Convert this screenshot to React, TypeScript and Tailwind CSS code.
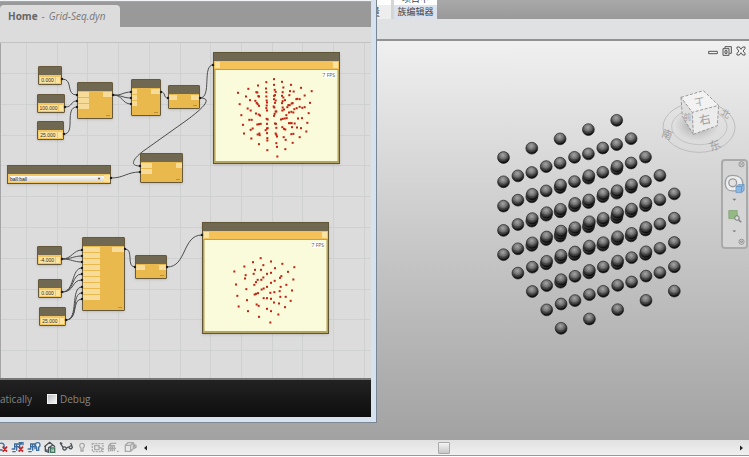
import React from 'react'

interface GraphNode {
  id: string
  x: number
  y: number
  w: number
  h: number
  inputs?: number
  inputWidth?: number
  outputWidth?: number
  value?: string
}

const nodes: GraphNode[] = [
  { id: 'min-a', x: 38, y: 23, w: 24, h: 19, value: '0.000' },
  { id: 'max-a', x: 37, y: 51, w: 28, h: 19, value: '100.000' },
  { id: 'step-a', x: 37, y: 78, w: 27, h: 19, value: '25.000' },
  { id: 'seq-a', x: 77, y: 39, w: 36, h: 37, inputs: 3, inputWidth: 11, outputWidth: 9 },
  { id: 'xyz-a', x: 131, y: 36, w: 30, h: 37, inputs: 3, inputWidth: 5, outputWidth: 9 },
  { id: 'flat-a', x: 168, y: 42, w: 32, h: 24, inputs: 1, inputWidth: 8, outputWidth: 8 },
  { id: 'family', x: 140, y: 110, w: 43, h: 30, inputs: 2, inputWidth: 11, outputWidth: 6 },
  { id: 'min-b', x: 37, y: 203, w: 25, h: 19, value: '-4.000' },
  { id: 'max-b', x: 38, y: 236, w: 24, h: 19, value: '0.000' },
  { id: 'step-b', x: 39, y: 264, w: 27, h: 19, value: '25.000' },
  { id: 'grid-b', x: 82, y: 194, w: 43, h: 74, inputs: 9, inputWidth: 17, outputWidth: 12 },
  { id: 'flat-b', x: 135, y: 212, w: 32, h: 24, inputs: 1, inputWidth: 9, outputWidth: 7 },
]

const wires = [
  'M62 79C74 79 65 95 77 95',
  'M65 107C73 107 70 101 77 101',
  'M64 134C76 134 64 107 77 107',
  'M113 95C121 96 123 92 131 92',
  'M113 95C121 95 123 98 131 98',
  'M113 95C123 95 122 104 131 104',
  'M161 92C166 92 163 98 168 98',
  'M200 98C212 98 202 65 213 65',
  'M200 98C212 98 206 106 187 120L142 152C132 160 130 166 140 166',
  'M111 178C124 178 127 172 140 172',
  'M62 259C72 259 73 250 82 250',
  'M62 259C72 259 73 256 82 256',
  'M62 259C72 259 73 262 82 262',
  'M62 292C75 292 71 268 82 268',
  'M62 292C75 292 71 274 82 274',
  'M62 292C75 292 71 280 82 280',
  'M66 320C79 320 70 287 82 287',
  'M66 320C79 320 71 293 82 293',
  'M66 320C79 320 71 299 82 299',
  'M125 249C134 249 126 267 135 267',
  'M167 267C187 267 182 235 202 235',
]

const ports = [
  [62, 79], [65, 107], [64, 134], [77, 95], [77, 101], [77, 107], [113, 95],
  [131, 92], [131, 98], [131, 104], [161, 92], [168, 98], [200, 98], [213, 65],
  [140, 166], [140, 172], [111, 178], [62, 259], [62, 292], [66, 320],
  [82, 250], [82, 256], [82, 262], [82, 268], [82, 274], [82, 280], [82, 287],
  [82, 293], [82, 299], [125, 249], [135, 267], [167, 267], [202, 235],
]

const cloudA = [
  [222, 118], [199, 127], [246, 126], [174, 137], [273, 135], [303, 144], [145, 147], [114, 159],
  [335, 154], [222, 135], [224, 150], [227, 156], [198, 146], [250, 143], [169, 157], [172, 158],
  [199, 157], [281, 155], [270, 154], [248, 157], [314, 167], [138, 170], [150, 181], [119, 193],
  [330, 189], [166, 183], [175, 169], [177, 170], [199, 170], [200, 182], [201, 188], [222, 168],
  [225, 166], [222, 178], [227, 182], [225, 189], [246, 168], [250, 173], [268, 166], [248, 184],
  [255, 181], [246, 190], [289, 178], [292, 177], [299, 178], [278, 190], [275, 191], [170, 189],
  [173, 193], [177, 198], [265, 196], [262, 202], [269, 196], [200, 197], [199, 205], [201, 212],
  [143, 206], [152, 212], [124, 226], [168, 221], [176, 224], [180, 227], [223, 203], [221, 200],
  [227, 215], [224, 222], [222, 228], [229, 215], [248, 203], [247, 212], [252, 209], [299, 201],
  [307, 204], [314, 202], [283, 208], [290, 205], [267, 218], [274, 216], [280, 218], [259, 226],
  [326, 220], [148, 240], [155, 240], [200, 237], [203, 239], [243, 239], [248, 237], [254, 236],
  [260, 235], [294, 236], [306, 235], [129, 255], [172, 254], [177, 253], [182, 252], [201, 252],
  [228, 252], [225, 251], [267, 250], [271, 250], [275, 250], [284, 251], [322, 249], [152, 270],
  [158, 266], [197, 271], [201, 266], [203, 265], [229, 264], [247, 262], [252, 267], [256, 269],
  [276, 262], [291, 263], [303, 265], [319, 275], [132, 281], [173, 284], [178, 281], [179, 286],
  [201, 280], [227, 281], [229, 285], [231, 290], [154, 296], [251, 292], [257, 300], [274, 283],
  [280, 282], [299, 292], [202, 295], [202, 302], [177, 313], [278, 309], [229, 310], [231, 321],
  [202, 331], [256, 328], [232, 350],
]

const cloudB = [
  [209, 143], [186, 155], [240, 153], [217, 164], [274, 160], [160, 168], [252, 173], [310, 170],
  [130, 183], [192, 178], [210, 178], [291, 184], [164, 194], [162, 204], [188, 190], [228, 190],
  [240, 187], [217, 201], [267, 202], [271, 197], [307, 207], [135, 222], [200, 208], [211, 208],
  [195, 215], [190, 223], [240, 217], [251, 211], [286, 223], [166, 236], [228, 229], [212, 237],
  [218, 234], [269, 229], [195, 250], [201, 248], [191, 252], [238, 247], [250, 245], [266, 242],
  [303, 240], [139, 256], [168, 269], [218, 263], [228, 263], [240, 265], [268, 259], [284, 259],
  [299, 271], [249, 276], [264, 279], [143, 288], [197, 282], [203, 286], [282, 290], [171, 302],
  [228, 295], [240, 302], [262, 312], [204, 319], [238, 336],
]

const steps = [0, 1, 2, 3, 4]

// 5 x 5 x 5 lattice, back layer first
const spheres = steps.flatMap((c) =>
  [...steps].reverse().flatMap((b) =>
    steps.map((a) => ({
      key: `${a}-${b}-${c}`,
      x: 503.5 + a * 28.3 + c * 14.4,
      y: 157.5 - a * 9.3 + b * 24.3 + c * 18.4,
    }))
  )
)

function NodeCard({ node }: { node: GraphNode }) {
  return (
    <div
      className="absolute flex flex-col rounded-[1px] border border-[#66583a] bg-[#eab94d] shadow-sm"
      style={{ left: node.x, top: node.y, width: node.w, height: node.h }}
    >
      <div className="h-2 shrink-0 bg-[#706850]" />
      {node.value ? (
        <div className="flex flex-1 items-center justify-between bg-[#f3c664] p-px">
          <span className="flex flex-1 justify-center bg-[#fbe3a6] font-['Liberation_Sans',sans-serif] text-[5px] leading-[6px] text-[#3a2e18]">
            {node.value}
          </span>
          <span className="ml-px h-[6px] w-1 bg-[#fce4a0]" />
        </div>
      ) : (
        <div className="flex flex-1 items-start justify-between pt-px">
          <div className="flex flex-col gap-px">
            {Array.from({ length: node.inputs ?? 0 }, (_, i) => (
              <span key={i} className="h-[5px] bg-[#f6dc98]" style={{ width: node.inputWidth }} />
            ))}
          </div>
          <span className="h-[5px] bg-[#f6dc98]" style={{ width: node.outputWidth }} />
          <span className="absolute right-0.5 bottom-0.5 h-px w-1 bg-[#b8903c]" />
        </div>
      )}
    </div>
  )
}

function WatchNode({ x, y, viewBox, points }: { x: number; y: number; viewBox: string; points: number[][] }) {
  return (
    <div
      className="absolute flex h-[112px] w-[127px] flex-col border border-[#5f5636] bg-[#b5a362] shadow-sm"
      style={{ left: x, top: y }}
    >
      <div className="h-2 bg-[#706850]" />
      <div className="flex h-2 items-center justify-between bg-[#f5c25a] px-px">
        <span className="h-[6px] w-[5px] bg-[#fce4a0]" />
        <span className="h-[6px] w-[5px] bg-[#fce4a0]" />
      </div>
      <div className="relative mx-px mt-px mb-0.5 flex-1 border-x border-[#d8cc94] bg-[#fafbda]">
        <svg viewBox={viewBox} className="absolute inset-0 h-full w-full">
          {points.map(([px, py], i) => (
            <rect key={i} x={px - 3} y={py - 3} width="6" height="6" fill="#c02314" />
          ))}
        </svg>
        <span className="absolute top-0.5 right-0.5 bg-white text-[5px] leading-[6px] text-[#555]">7 FPS</span>
      </div>
    </div>
  )
}

function GraphCanvas() {
  return (
    <div className="relative min-h-0 flex-1 overflow-hidden border-l border-[#a5a5a5] bg-[#dcdcdc]">
      <div className="absolute inset-y-0 -left-px w-full">
        <svg className="absolute inset-0 h-full w-full">
          <g stroke="#cfd0d0" strokeWidth="1">
            {Array.from({ length: 12 }, (_, i) => (
              <path key={i} d={`M${26.5 + Math.round(i * 30.7)} 0V340`} />
            ))}
            {Array.from({ length: 10 }, (_, i) => (
              <path key={i} d={`M0 ${30.5 + Math.round(i * 30.8)}H380`} />
            ))}
          </g>
        </svg>
        {nodes.map((node) => (
          <NodeCard key={node.id} node={node} />
        ))}
        <div className="absolute top-[122px] left-[7px] flex h-[19px] w-[104px] flex-col border border-[#66583a] bg-[#f3c664] shadow-sm">
          <div className="h-2 bg-[#706850]" />
          <div className="flex flex-1 items-center gap-px pl-0.5">
            <select
              aria-label="Family type"
              className="h-[6px] min-w-0 flex-1 appearance-none bg-linear-to-b from-[#fafafa] to-[#d8d5cc] font-['Liberation_Sans',sans-serif] text-[5px] leading-[6px] text-[#222]"
            >
              <option>ball:ball</option>
            </select>
            <span className="-ml-2 w-1.5 text-[4px] leading-[6px] text-[#333]">▼</span>
            <span className="h-[7px] w-[6px] bg-[#fce4a0]" />
          </div>
        </div>
        <WatchNode x={213} y={9} viewBox="48 92 363 270" points={cloudA} />
        <WatchNode x={202} y={179} viewBox="42 90 363 270" points={cloudB} />
        <svg className="pointer-events-none absolute inset-0 h-full w-full">
          <g transform="translate(0 -43)">
            <g fill="none" stroke="#4d4d4d" strokeWidth="1">
              {wires.map((d) => (
                <path key={d} d={d} />
              ))}
            </g>
            {ports.map(([x, y]) => (
              <circle key={`${x}-${y}`} cx={x} cy={y} r="1.2" fill="#1c1c1c" />
            ))}
          </g>
        </svg>
      </div>
    </div>
  )
}

function DynamoWindow() {
  return (
    <section className="absolute top-0 left-0 flex h-[423px] w-[377px] flex-col border-r border-b border-[#7c8592] bg-[#d6e2f0] pr-[5px] pb-[5px] font-['Open_Sans',sans-serif]">
      <div className="h-0.5 shrink-0 border-b border-[#a5a5a5] bg-[#f1f4f7]" />
      <div className="flex h-[25px] shrink-0 items-end bg-[#999]">
        <div className="flex h-[22px] w-[120px] items-center rounded-t-sm bg-[#dcdcdc] pl-2 text-[10px] leading-4 whitespace-nowrap text-[#777]">
          <b className="text-[#666]">Home</b>
          <span className="px-1">-</span>
          <i>Grid-Seq.dyn</i>
        </div>
      </div>
      <div className="h-4 shrink-0 border-b border-[#c2c2c2] bg-[#dcdcdc]" />
      <GraphCanvas />
      <footer className="flex h-[39px] shrink-0 items-center border-t-2 border-[#777] bg-linear-to-b from-[#222] to-[#0e0e0e] text-[10px] leading-4 text-[#858585]">
        <label className="flex w-8 justify-end overflow-hidden whitespace-nowrap">
          <input type="checkbox" className="sr-only" />
          matically
        </label>
        <label className="ml-[15px] flex items-center gap-[3px]">
          <input
            type="checkbox"
            className="h-[10px] w-[10px] appearance-none border border-[#f2f2f2] bg-linear-to-br from-[#bcc0c4] to-[#f4f4f4]"
          />
          Debug
        </label>
      </footer>
    </section>
  )
}

function ViewCube() {
  return (
    <svg viewBox="55 180 231 198" className="mr-3 h-[66px] w-[77px]" fill="none">
      <defs>
        <radialGradient id="cubeShadow">
          <stop offset="0" stopColor="#777" stopOpacity=".75" />
          <stop offset="1" stopColor="#aaa" stopOpacity="0" />
        </radialGradient>
      </defs>
      <ellipse cx="172" cy="295" rx="108" ry="75" stroke="#bdbdbd" strokeWidth="3" />
      <ellipse cx="173" cy="293" rx="83" ry="54" stroke="#c3c3c3" strokeWidth="3" />
      <ellipse cx="166" cy="286" rx="68" ry="50" fill="url(#cubeShadow)" />
      <path d="M118 205L185 185L231 229L152 250Z" fill="#f2f2f2" />
      <path d="M118 205L152 250L155 316L122 262Z" fill="#dedede" />
      <path d="M152 250L231 229L227 290L155 316Z" fill="#ececec" />
      <path
        d="M118 205L185 185L231 229L152 250ZM118 205L122 262L155 316L152 250M155 316L227 290L231 229"
        stroke="#9a9a9a"
        strokeWidth="3"
        strokeDasharray="9 5"
      />
      <g fill="#a0a0a0" fontFamily="Noto Sans CJK SC, sans-serif" textAnchor="middle">
        <text x="173" y="230" fontSize="29" transform="rotate(170 173 219)">上</text>
        <text x="190" y="284" fontSize="35" transform="rotate(-12 190 272)">右</text>
        <text x="137" y="273" fontSize="24">前</text>
        <text x="76" y="328" fontSize="32" transform="rotate(20 76 318)">南</text>
        <text x="220" y="362" fontSize="35" transform="rotate(-22 220 351)">东</text>
        <text x="251" y="264" fontSize="28" transform="rotate(28 251 254)">北</text>
      </g>
    </svg>
  )
}

function NavigationBar() {
  return (
    <nav className="mr-px flex h-[90px] w-[27px] flex-col items-center rounded border-2 border-[#aaa] bg-[#d5d5d5]">
      <svg viewBox="0 0 69 264" className="h-[88px] w-[23px]" fill="none">
        <g stroke="#949494" strokeWidth="3">
          <circle cx="56" cy="10" r="8" />
          <path d="M52 6l8 8m0-8l-8 8" />
          <circle cx="56" cy="248" r="8" />
          <path d="M52 246h8l-4 6z" />
        </g>
        <path d="M28 44C12 44 6 56 6 69s8 23 23 23h31V69c0-16-13-25-32-25z" fill="#ededed" stroke="#9aa0a5" strokeWidth="4" />
        <circle cx="29" cy="67" r="12" fill="#e2e2e2" stroke="#999" strokeWidth="4" />
        <path d="M39 78l8-6h17v18l-8 7H39z" fill="#8db8e4" stroke="#638fbd" strokeWidth="2" />
        <path d="M39 78h17v19M56 78l8-6" stroke="#5c87b4" strokeWidth="2" />
        <path d="M28 116h12l-6 6zM28 213h12l-6 6z" fill="#777" />
        <path d="M17 152h26v25H17z" fill="#94b985" stroke="#759d68" strokeWidth="2" />
        <circle cx="42" cy="175" r="7" fill="#d9dfdb" stroke="#777" strokeWidth="3" />
        <path d="M47 180l8 8" stroke="#888" strokeWidth="5" />
      </svg>
    </nav>
  )
}

function WindowControls() {
  return (
    <div className="flex h-5 items-center gap-1 pr-[3px] text-[#555]">
      <button aria-label="Minimize">
        <svg viewBox="0 0 30 30" className="h-2.5 w-2.5" fill="none">
          <path d="M2 16h26v7H2z" fill="#f4f4f4" stroke="currentColor" strokeWidth="3" />
        </svg>
      </button>
      <button aria-label="Restore">
        <svg viewBox="0 0 30 30" className="h-2.5 w-2.5" fill="none">
          <path d="M9 7V2h19v20h-6M3 8h18v20H3zM9 14h6v8H9z" stroke="currentColor" strokeWidth="3" />
        </svg>
      </button>
      <button aria-label="Close">
        <svg viewBox="0 0 30 30" className="h-2.5 w-2.5">
          <path
            d="M3 3h7l5 7 5-7h7v5l-6 7 6 7v5h-7l-5-7-5 7H3v-5l6-7-6-7z"
            fill="#f4f4f4"
            stroke="currentColor"
            strokeWidth="3"
          />
        </svg>
      </button>
    </div>
  )
}

function Viewport() {
  return (
    <main className="relative flex min-h-0 flex-1 flex-col items-end bg-linear-to-b from-[#f0f0f0] to-[#a2a2a2]">
      <svg className="absolute inset-0 h-full w-full">
        <defs>
          <radialGradient id="ball" cx=".45" cy=".3" r=".72">
            <stop offset="0" stopColor="#a6a6a6" />
            <stop offset=".4" stopColor="#747474" />
            <stop offset=".68" stopColor="#3e3e3e" />
            <stop offset=".9" stopColor="#050505" />
          </radialGradient>
        </defs>
        <g transform="translate(0 -41)">
          {spheres.map((s) => (
            <g key={s.key}>
              <circle cx={s.x} cy={s.y} r="5.9" fill="url(#ball)" stroke="#222" strokeWidth=".7" />
              <path
                d={`M${s.x - 5} ${s.y + 1.5}Q${s.x} ${s.y + 4} ${s.x + 5} ${s.y + 1.5}`}
                fill="none"
                stroke="#222"
                strokeOpacity=".35"
                strokeWidth=".7"
              />
            </g>
          ))}
        </g>
      </svg>
      <div className="relative flex flex-col items-end">
        <WindowControls />
        <div className="mt-7">
          <ViewCube />
        </div>
        <div className="mt-1">
          <NavigationBar />
        </div>
      </div>
    </main>
  )
}

function StatusIcons() {
  return (
    <svg viewBox="0 0 420 45" className="h-[15px] w-[140px] shrink-0" fill="none" strokeWidth="4">
      <g stroke="#3c6f9f">
        <path d="M0 10c10-3 14 4 12 13M0 30h8" />
        <path d="M35 27h9V12h22M44 20h15M50 12v20M59 12v16M37 35h10M56 8h13v8" />
        <path d="M83 27h9V12h16M92 20h12M98 12v20M85 35h10M105 12v16" />
        <path d="M113 8c9 0 9 10 3 14v9h-6v-9c-6-4-5-14 3-14z" fill="#e9f2fc" />
      </g>
      <path d="M8 20l13 15M21 20L8 35M56 20l13 15M69 20L56 35" stroke="#c62329" strokeWidth="5" />
      <g stroke="#4a5359">
        <path d="M133 20l16-13 16 13M136 18v15l10 4V23l13-8M141 28v7M151 19v6" />
        <path d="M152 24h12v13h-12z" fill="#e4f4ea" stroke="#427760" />
        <path d="M155 29h6M155 33h6" stroke="#427760" strokeWidth="2" />
        <path d="M180 8l9 14c-3 8 7 11 10 4 4-5 6-6 9-2 4 5 12 0 8-6L212 9M189 22c5-3 9-1 10 4M207 22c3-5 8-6 10-1M180 8l7 3" />
      </g>
      <g stroke="#aaa">
        <path d="M246 10c9 0 9 10 3 14v9h-6v-9c-6-4-5-14 3-14z" />
        <path d="M277 11h32v24h-32z" strokeDasharray="6 3" />
        <path d="M284 17h13v12h-13zM299 22l9 4-5 8" />
        <path d="M326 35V17l6-7h17M326 17h17v17M332 10v24M323 25h25M337 17v17M351 34h5" />
        <path d="M376 16l8-8h16v18l-8 8h-16zM376 16h16v18M392 16l8-8M404 11v16M408 14v10" />
      </g>
    </svg>
  )
}

export default function App() {
  return (
    <div className="relative flex h-screen flex-col overflow-hidden bg-white font-['Open_Sans','Noto_Sans_CJK_SC',sans-serif]">
      <header className="flex h-[19px] shrink-0 bg-linear-to-b from-[#a9a9a9] to-[#999] pl-[377px] text-[#434343]">
        <div className="flex w-[14px] flex-col justify-between bg-white">
          <div className="h-[5px]" />
          <div className="flex h-[14px] w-full justify-end overflow-hidden bg-[#eee] pr-[11px] text-[10px] leading-[14px]">
            <span>量</span>
          </div>
        </div>
        <div className="flex w-[46px] flex-col border-l-[3px] border-[#d5d5d5]">
          <div className="flex h-[5px] items-end justify-center overflow-hidden bg-white text-[9px] leading-3">
            <span className="whitespace-nowrap">项目中</span>
          </div>
          <div className="h-[14px] bg-[#dbe2ec] text-center text-[9px] leading-[14px] whitespace-nowrap">族编辑器</div>
        </div>
      </header>
      <div className="h-[22px] shrink-0 border-b-2 border-[#929292] bg-[#dfe1e2]" />
      <Viewport />
      <footer className="flex h-[17px] shrink-0 items-start border-b border-white bg-[#ececec]">
        <div className="flex h-4 min-w-0 flex-1 items-center border-b border-[#999] bg-linear-to-b from-[#e1e1e1] to-[#f0f0f0]">
          <StatusIcons />
          <button aria-label="Scroll left" className="ml-0.5 px-px">
            <svg viewBox="0 0 5 6" className="h-1.5 w-[5px]">
              <path d="M4 .5v5L1 3z" fill="#222" />
            </svg>
          </button>
          <div className="flex min-w-0 flex-1 justify-center">
            <div className="h-3 w-3 rounded-[1px] border border-[#aaa] bg-linear-to-b from-[#f4f4f4] to-[#c7c7c7]" />
          </div>
          <button aria-label="Scroll right" className="mr-1 px-px">
            <svg viewBox="0 0 5 6" className="h-1.5 w-[5px]">
              <path d="M1 .5v5l3-2.5z" fill="#222" />
            </svg>
          </button>
        </div>
      </footer>
      <DynamoWindow />
    </div>
  )
}
